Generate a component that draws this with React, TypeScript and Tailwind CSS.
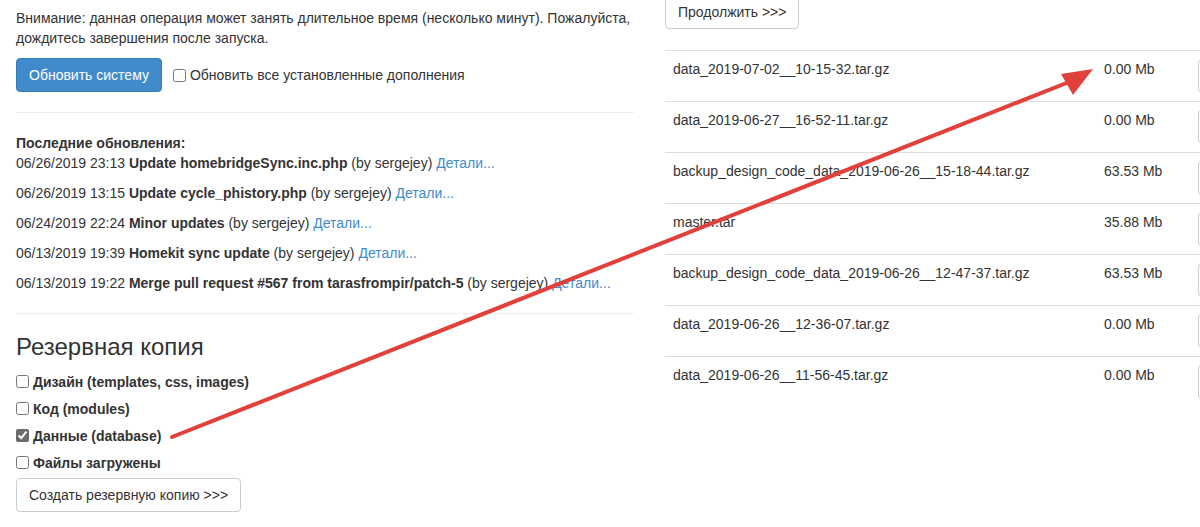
import React from "react";

const updates = [
  { d: "06/26/2019 23:13", t: "Update homebridgeSync.inc.php" },
  { d: "06/26/2019 13:15", t: "Update cycle_phistory.php" },
  { d: "06/24/2019 22:24", t: "Minor updates" },
  { d: "06/13/2019 19:39", t: "Homekit sync update" },
  { d: "06/13/2019 19:22", t: "Merge pull request #567 from tarasfrompir/patch-5" },
];

const files = [
  { n: "data_2019-07-02__10-15-32.tar.gz", s: "0.00 Mb" },
  { n: "data_2019-06-27__16-52-11.tar.gz", s: "0.00 Mb" },
  { n: "backup_design_code_data_2019-06-26__15-18-44.tar.gz", s: "63.53 Mb" },
  { n: "master.tar", s: "35.88 Mb" },
  { n: "backup_design_code_data_2019-06-26__12-47-37.tar.gz", s: "63.53 Mb" },
  { n: "data_2019-06-26__12-36-07.tar.gz", s: "0.00 Mb" },
  { n: "data_2019-06-26__11-56-45.tar.gz", s: "0.00 Mb" },
];

function Check({ checked }: { checked?: boolean }) {
  return (
    <input
      type="checkbox"
      defaultChecked={checked}
      className="w-[13px] h-[13px] m-0 shrink-0 accent-[#6b6b6b]"
    />
  );
}

export default function App() {
  return (
    <div
      className="relative w-[1200px] h-[527px] overflow-hidden bg-white text-[#333] text-[14px] leading-[20px]"
      style={{ fontFamily: '"Liberation Sans", Arial, sans-serif' }}
    >
      <div className="flex">
        {/* Left column */}
        <div className="w-[618px] ml-[16px] shrink-0 pt-[8px]">
          <p>
            Внимание: данная операция может занять длительное время (несколько минут). Пожалуйста,
            <br />
            дождитесь завершения после запуска.
          </p>
          <div className="flex items-center mt-[10px]">
            <button className="h-[34px] px-[12px] bg-[#428bca] border border-[#357ebd] rounded-[4px] text-white">
              Обновить систему
            </button>
            <label className="flex items-center ml-[11px] gap-[4px]">
              <Check />
              <span>Обновить все установленные дополнения</span>
            </label>
          </div>
          <hr className="my-[20px] border-t border-[#eee]" />
          <div className="font-bold">Последние обновления:</div>
          {updates.map((u, i) => (
            <p key={i} className="mb-[10px] last:mb-0 whitespace-nowrap">
              {u.d} <b>{u.t}</b> (by sergejey){" "}
              <a className="text-[#428bca]">Детали...</a>
            </p>
          ))}
          <hr className="my-[20px] border-t border-[#eee]" />
          <h3 className="text-[24px] leading-[26.4px] mb-[8px]">Резервная копия</h3>
          {[
            ["Дизайн", " (templates, css, images)", false],
            ["Код", " (modules)", false],
            ["Данные", " (database)", true],
            ["Файлы загружены", "", false],
          ].map(([a, b, c], i) => (
            <label key={i} className="flex items-center h-[27px] gap-[4px] font-bold">
              <Check checked={c as boolean} />
              <span>
                {a as string}
                {b as string}
              </span>
            </label>
          ))}
          <button className="mt-[2px] h-[34px] px-[12px] bg-white border border-[#ccc] rounded-[4px] text-[#333]">
            Создать резервную копию &gt;&gt;&gt;
          </button>
        </div>

        {/* Right column */}
        <div className="ml-[31px] w-[640px] shrink-0 -mt-[5px]">
          <button className="h-[34px] px-[12px] bg-white border border-[#ccc] rounded-[4px] text-[#333]">
            Продолжить &gt;&gt;&gt;
          </button>
          <div className="mt-[21px]">
            {files.map((f, i) => (
              <div key={i} className="flex border-t border-[#ddd] p-[8px] h-[51px]">
                <div className="w-[431px] shrink-0">{f.n}</div>
                <div className="w-[94px] shrink-0">{f.s}</div>
                <button className="h-[34px] w-[90px] bg-white border border-[#ccc] rounded-[4px]" />
              </div>
            ))}
          </div>
        </div>
      </div>

      {/* Red annotation arrow */}
      <svg className="absolute left-0 top-0 pointer-events-none" width="1200" height="527" viewBox="0 0 1200 527">
        <line x1="172" y1="437" x2="1069" y2="82" stroke="#e2403a" strokeWidth="4" strokeLinecap="round" />
        <polygon points="1093,69 1061,74 1073,95" fill="#e2403a" />
      </svg>
    </div>
  );
}
